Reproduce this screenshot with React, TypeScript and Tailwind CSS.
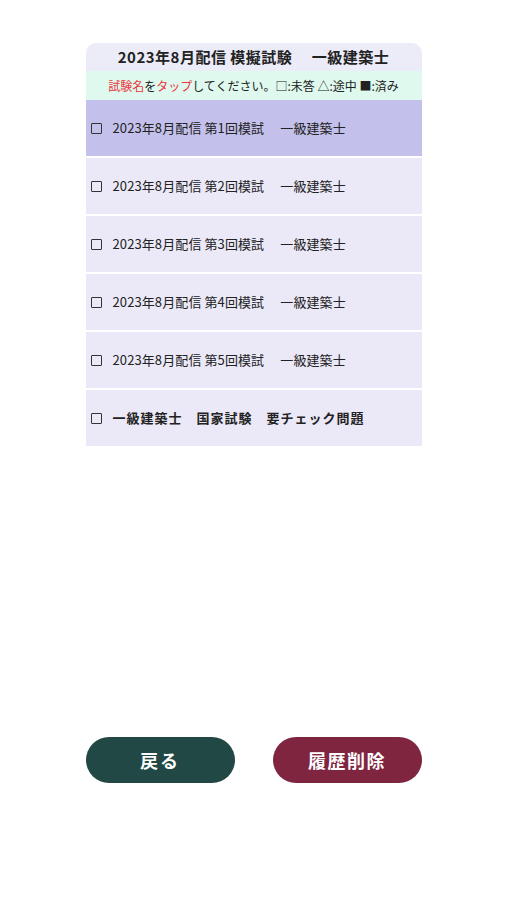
import React from "react";

const rows = [
  { label: "2023年8月配信 第1回模試　 一級建築士", active: true, bold: false },
  { label: "2023年8月配信 第2回模試　 一級建築士", active: false, bold: false },
  { label: "2023年8月配信 第3回模試　 一級建築士", active: false, bold: false },
  { label: "2023年8月配信 第4回模試　 一級建築士", active: false, bold: false },
  { label: "2023年8月配信 第5回模試　 一級建築士", active: false, bold: false },
  { label: "一級建築士　国家試験　要チェック問題", active: false, bold: true },
];

export default function App() {
  return (
    <div
      className="w-[507px] h-[900px] bg-white flex flex-col items-center text-[#222]"
      style={{ fontFamily: '"Noto Sans CJK JP", "Noto Sans", sans-serif' }}
    >
      <div className="mt-[43px] w-[336px] flex flex-col">
        <div className="h-[28px] bg-[#ecebf8] rounded-t-[10px] flex items-center justify-center text-[15px] font-bold tracking-[0.5px]">
          2023年8月配信 模擬試験　 一級建築士
        </div>
        <div className="h-[29px] bg-[#dff9ee] flex items-center justify-center text-[12px]">
          <span className="text-[#e8383d]">試験名</span>
          <span>を</span>
          <span className="text-[#e8383d]">タップ</span>
          <span>してください。□:未答 △:途中 ■:済み</span>
        </div>
        <div className="flex flex-col gap-[2px]">
          {rows.map((r, i) => (
            <div
              key={i}
              className={`h-[56px] flex items-center pl-[5px] ${r.active ? "bg-[#c3c1eb]" : "bg-[#ebe9f8]"}`}
            >
              <div className="w-[11px] h-[11px] border-[1.5px] border-[#333] rounded-[1px] mr-[11px]" />
              <span className={`text-[13px] ${r.bold ? "font-bold tracking-[1px]" : "tracking-[0.1px]"}`}>{r.label}</span>
            </div>
          ))}
        </div>
      </div>
      <div className="mt-[291px] w-[336px] flex justify-between">
        <button className="w-[149px] h-[46px] rounded-full bg-[#224845] text-white text-[18px] font-bold tracking-[2px] flex items-center justify-center">
          戻る
        </button>
        <button className="w-[149px] h-[46px] rounded-full bg-[#7f2540] text-white text-[18px] font-bold tracking-[1.5px] flex items-center justify-center">
          履歴削除
        </button>
      </div>
    </div>
  );
}
